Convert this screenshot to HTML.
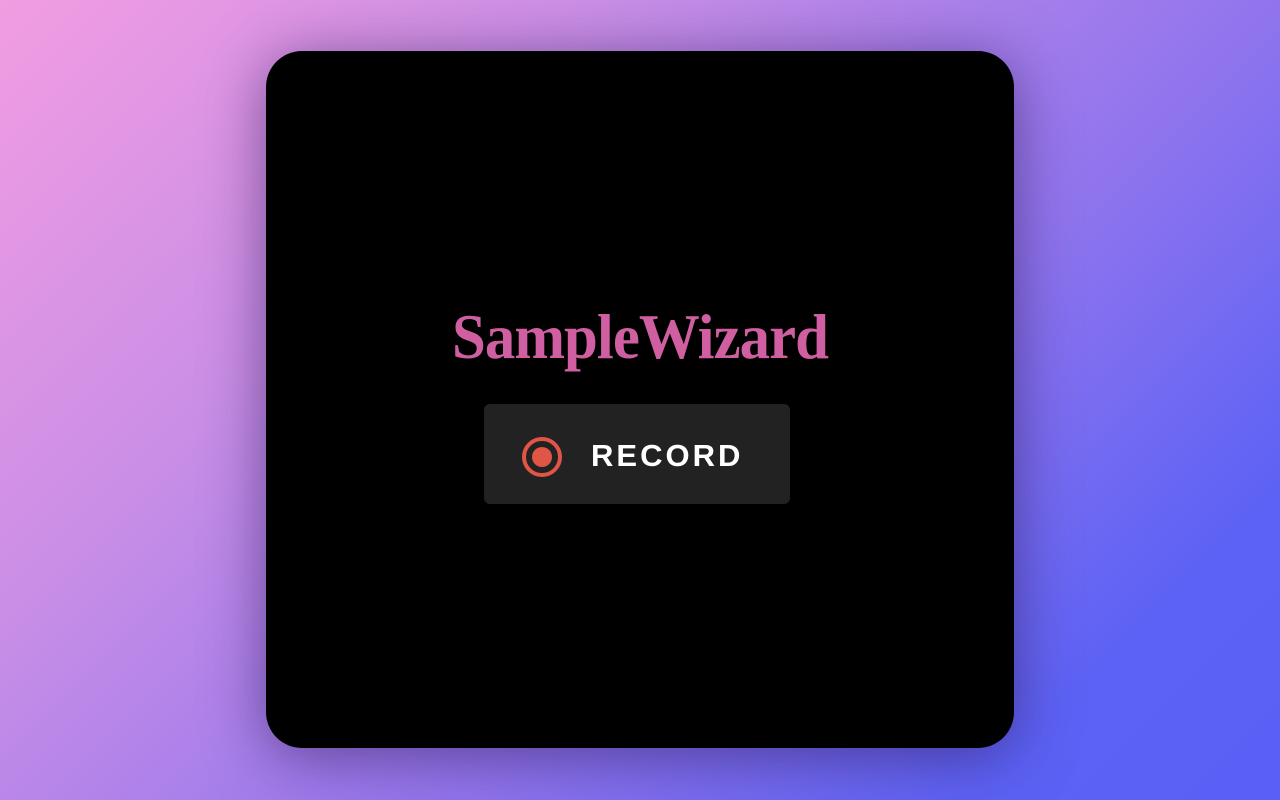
<!DOCTYPE html>
<html><head><style>
html,body{margin:0;padding:0;width:1280px;height:800px;overflow:hidden}
body{background:linear-gradient(135deg,#f29de2 0%,#c98ee6 30%,#8f74ee 62%,#5c62f5 85%,#5a60f5 100%);position:relative;font-family:"Liberation Sans",sans-serif}
.card{position:absolute;left:266px;top:51px;width:748px;height:697px;background:#000;border-radius:36px;box-shadow:0 8px 60px rgba(40,20,80,0.55)}
.title{position:absolute;left:0;width:748px;top:246px;text-align:center;font-family:"Liberation Serif",serif;font-weight:bold;font-size:64px;color:#d05fa2;letter-spacing:-1px;transform:scaleX(0.95);line-height:80px}
.btn{position:absolute;left:218px;top:353px;width:306px;height:100px;background:#222;border-radius:6px}
.ring{position:absolute;left:38px;top:33px;width:32px;height:32px;border:4px solid #e05545;border-radius:50%}
.dot{position:absolute;left:6px;top:6px;width:20px;height:20px;background:#e05545;border-radius:50%}
.txt{position:absolute;left:107px;top:33px;font-size:31px;font-weight:bold;color:#fff;letter-spacing:3px;line-height:38px}
</style></head><body>
<div class="card">
<div class="title">SampleWizard</div>
<div class="btn"><div class="ring"><div class="dot"></div></div><div class="txt">RECORD</div></div>
</div>
</body></html>
